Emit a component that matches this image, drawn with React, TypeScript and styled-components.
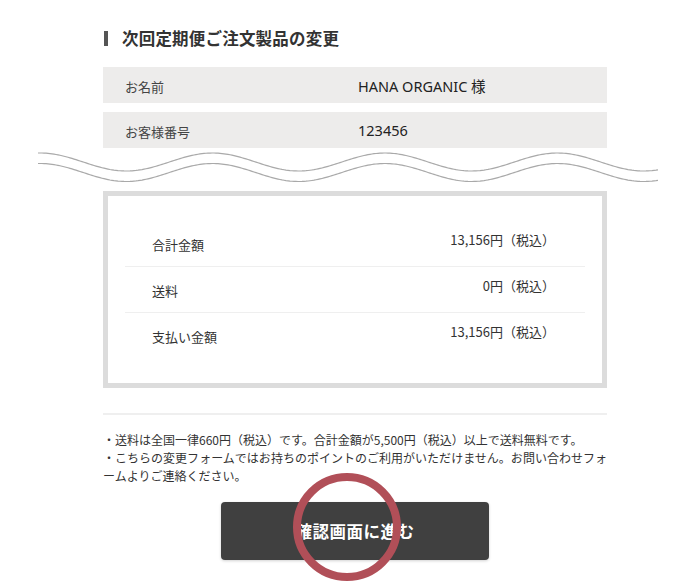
import React from "react";
import styled, { createGlobalStyle } from "styled-components";

const GlobalStyle = createGlobalStyle`
  html, body { margin: 0; padding: 0; background: #ffffff; }
  body { font-family: "Noto Sans CJK JP", "Noto Sans", sans-serif; color: #333; }
`;

const Page = styled.div`
  position: relative;
  width: 700px;
  padding-top: 26px;
  padding-bottom: 27px;
`;

const Column = styled.div`
  width: 504px;
  margin-left: 103px;
`;

const Heading = styled.h2`
  display: flex;
  align-items: center;
  gap: 14px;
  height: 24px;
  margin: 0 0 17px;
  font-size: 16.5px;
  font-weight: 700;
  color: #333;
  letter-spacing: 0.2px;
  &::before {
    content: "";
    display: block;
    width: 4px;
    height: 15px;
    background: #555;
    margin-left: 1px;
  }
`;

const InfoList = styled.div`
  display: flex;
  flex-direction: column;
  gap: 9px;
`;

const InfoRow = styled.div`
  display: grid;
  grid-template-columns: 233px 1fr;
  align-items: center;
  height: 36px;
  padding: 0 22px;
  background: #edeceb;
`;

const InfoLabel = styled.span`
  font-size: 13px;
  color: #444;
  padding-top: 2px;
`;

const InfoValue = styled.span`
  font-family: "Noto Sans", "Noto Sans CJK JP", sans-serif;
  font-size: 14.5px;
  color: #222;
`;

const WaveWrap = styled.div`
  margin-left: -65px;
  width: 620px;
  height: 40px;
  margin-top: 1px;
  margin-bottom: 2px;
`;

const TotalsBox = styled.div`
  border: 5px solid #dcdcdc;
  padding: 24px 17px 25px;
`;

const TotalsRow = styled.div`
  display: flex;
  justify-content: space-between;
  align-items: center;
  height: 46px;
  box-sizing: border-box;
  padding: 0 30px 0 27px;
  & + & { border-top: 1px solid #efefef; }
`;

const TotalsLabel = styled.span`
  font-size: 13px;
  color: #333;
  padding-top: 2px;
`;

const TotalsValue = styled.span`
  font-size: 13px;
  color: #333;
  padding-bottom: 8px;
`;

const Divider = styled.hr`
  border: 0;
  height: 2px;
  background: #efefef;
  margin: 25px 0 0;
`;

const Notes = styled.p`
  margin: 16px 0 0;
  font-size: 12px;
  line-height: 18px;
  color: #333;
  text-align: justify;
`;

const ButtonRow = styled.div`
  display: flex;
  justify-content: center;
  margin-top: 17px;
`;

const SubmitButton = styled.button`
  width: 268px;
  height: 58px;
  border: 0;
  border-radius: 4px;
  background: #404040;
  box-shadow: 0 1px 3px rgba(0, 0, 0, 0.18);
  color: #fff;
  font-family: "Noto Sans CJK JP", sans-serif;
  font-size: 16.5px;
  font-weight: 700;
  letter-spacing: 0.5px;
  cursor: pointer;
`;

const Marker = styled.svg`
  position: absolute;
  left: 289px;
  top: 469px;
  width: 116px;
  height: 116px;
  pointer-events: none;
`;

function wavePath(offset: number): string {
  const pts: string[] = [];
  for (let x = 0; x <= 620; x += 2) {
    const y = 13 + offset - 9 * Math.cos((2 * Math.PI * (x - 2)) / 172.5);
    pts.push(`${x === 0 ? "M" : "L"}${x},${y.toFixed(2)}`);
  }
  return pts.join(" ");
}

const Wave = () => (
  <WaveWrap>
    <svg width="620" height="40" viewBox="0 0 620 40">
      <path d={wavePath(0)} fill="none" stroke="#a9a9a9" strokeWidth="1.2" />
      <path d={wavePath(10.5)} fill="none" stroke="#a9a9a9" strokeWidth="1.2" />
    </svg>
  </WaveWrap>
);

const info = [
  { label: "お名前", value: "HANA ORGANIC 様" },
  { label: "お客様番号", value: "123456" },
];

const totals = [
  { label: "合計金額", value: "13,156円（税込）" },
  { label: "送料", value: "0円（税込）" },
  { label: "支払い金額", value: "13,156円（税込）" },
];

export default function App() {
  return (
    <>
      <GlobalStyle />
      <Page>
        <Column>
          <Heading>次回定期便ご注文製品の変更</Heading>
          <InfoList>
            {info.map((r) => (
              <InfoRow key={r.label}>
                <InfoLabel>{r.label}</InfoLabel>
                <InfoValue>{r.value}</InfoValue>
              </InfoRow>
            ))}
          </InfoList>
          <Wave />
          <TotalsBox>
            {totals.map((r) => (
              <TotalsRow key={r.label}>
                <TotalsLabel>{r.label}</TotalsLabel>
                <TotalsValue>{r.value}</TotalsValue>
              </TotalsRow>
            ))}
          </TotalsBox>
          <Divider />
          <Notes>
            ・送料は全国一律660円（税込）です。合計金額が5,500円（税込）以上で送料無料です。
            <br />
            ・こちらの変更フォームではお持ちのポイントのご利用がいただけません。お問い合わせフォームよりご連絡ください。
          </Notes>
          <ButtonRow>
            <SubmitButton type="button">確認画面に進む</SubmitButton>
          </ButtonRow>
        </Column>
        <Marker viewBox="0 0 116 116">
          <circle cx="58" cy="58" r="50" fill="none" stroke="#b14f58" strokeWidth="8" />
        </Marker>
      </Page>
    </>
  );
}
